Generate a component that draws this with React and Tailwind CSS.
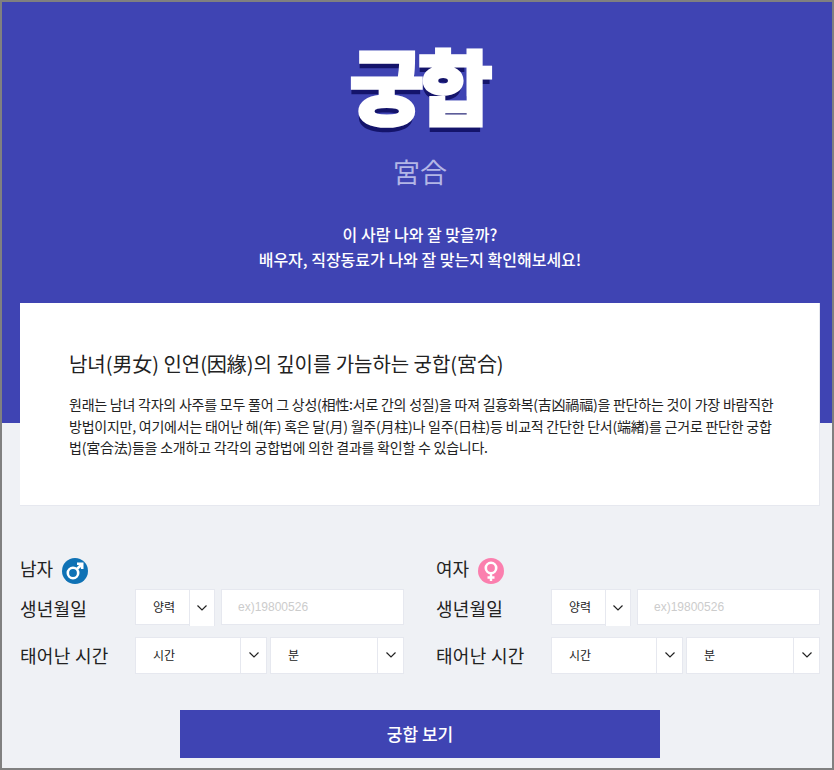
import React from "react";

const font = { fontFamily: '"Noto Sans CJK KR", "Noto Sans", sans-serif' };

function Chevron() {
  return (
    <svg width="12" height="8" viewBox="0 0 12 8" fill="none" stroke="#222" strokeWidth="1.2">
      <path d="M1.5 1.5 L6 6 L10.5 1.5" />
    </svg>
  );
}

function Select({ label, widthClass, labelClass }) {
  return (
    <div className={`flex ${widthClass} h-[37px]`}>
      <div className={`flex-1 bg-white border border-[#e6e8ef] border-r-0 flex items-center text-[12px] text-[#222] ${labelClass}`}>
        {label}
      </div>
      <div className="w-[27px] bg-white border border-[#e6e8ef] flex items-center justify-center shrink-0">
        <Chevron />
      </div>
    </div>
  );
}

function Person({ name, icon }) {
  return (
    <div className="w-[384px]">
      <div className="flex items-center gap-[9px] h-[28px] mt-[3px]">
        <span className="text-[18px] leading-[28px] text-[#222] -mt-[4px]">{name}</span>
        {icon}
      </div>
      <div className="flex items-start mt-[5px] h-[39px]">
        <div className="w-[115px] text-[18px] leading-[38px] text-[#222] tracking-[0.2px]">생년월일</div>
        <div className="flex w-[80px] h-[37px]">
          <div className="w-[54px] h-[36px] bg-white border border-[#e6e8ef] border-r-0 flex items-center text-[12px] text-[#222] pl-[17px]">양력</div>
          <div className="w-[26px] h-[37px] bg-white border-l border-t border-r border-[#e6e8ef] flex items-center justify-center">
            <Chevron />
          </div>
        </div>
        <div className="ml-[6px] w-[183px] h-[36px] bg-white border border-[#e6e8ef] flex items-center pl-[16px] text-[12px] text-[#cccccc]" style={{ fontFamily: '"Liberation Sans", sans-serif' }}>
          ex)19800526
        </div>
      </div>
      <div className="flex items-center mt-[8px] h-[38px]">
        <div className="w-[115px] text-[18px] leading-[38px] text-[#222] tracking-[0.3px]">태어난 시간</div>
        <div className="flex gap-[3px]">
          <Select label="시간" widthClass="w-[132px]" labelClass="pl-[17px]" />
          <Select label="분" widthClass="w-[134px]" labelClass="pl-[17px]" />
        </div>
      </div>
    </div>
  );
}

const Male = (
  <svg width="26" height="26" viewBox="0 0 26 26" className="mt-[2px]">
    <circle cx="13" cy="13" r="13" fill="#0f72b5" />
    <circle cx="11" cy="15" r="5.2" fill="none" stroke="#fff" strokeWidth="2.6" />
    <path d="M15 11 L20 6 M15 5.8 H20.2 V11" fill="none" stroke="#fff" strokeWidth="2.6" />
  </svg>
);

const Female = (
  <svg width="26" height="26" viewBox="0 0 26 26" className="mt-[2px]">
    <circle cx="13" cy="13" r="13" fill="#fb7fae" />
    <circle cx="13" cy="10" r="5.2" fill="none" stroke="#fff" strokeWidth="2.6" />
    <path d="M13 15 V23 M9.5 19.5 H16.5" fill="none" stroke="#fff" strokeWidth="2.4" />
  </svg>
);

export default function App() {
  return (
    <div className="w-[834px] h-[770px] border-2 border-[#808080] bg-[#eff1f5] overflow-hidden" style={font}>
      <div className="h-[421px] bg-[#3f44b3] pl-[18px] pr-[12px]">
        <div className="flex flex-col items-center">
          <div
            className="mt-[26px] text-[81px] leading-[110px] font-black text-white tracking-[-6px] -ml-[4px]"
            style={{ textShadow: "-1px 6px 0 #14146b", WebkitTextStroke: "3px #fff" }}
          >
            궁합
          </div>
          <div className="mt-[14px] text-[27px] leading-[40px] text-[#b3b6e6]">宮合</div>
          <div className="mt-[30px] text-[16px] leading-[25px] font-medium text-white text-center">
            <p>이 사람 나와 잘 맞을까?</p>
            <p>배우자, 직장동료가 나와 잘 맞는지 확인해보세요!</p>
          </div>
        </div>
      </div>
      <div className="pl-[18px] pr-[12px]">
        <div className="relative -mt-[120px] h-[203px] bg-white border-b border-r border-[#e6e8ef] pl-[49px] pt-[44px]">
          <h1 className="text-[20px] leading-[34px] font-normal text-[#222] tracking-[-0.05px]">남녀(男女) 인연(因緣)의 깊이를 가늠하는 궁합(宮合)</h1>
          <p className="mt-[13px] w-[712px] text-[14px] leading-[21.7px] text-[#222] tracking-[-0.23px]">
            원래는 남녀 각자의 사주를 모두 풀어 그 상성(相性:서로 간의 성질)을 따져 길흉화복(吉凶禍福)을 판단하는 것이 가장 바람직한 방법이지만, 여기에서는 태어난 해(年) 혹은 달(月) 월주(月柱)나 일주(日柱)등 비교적 간단한 단서(端緖)를 근거로 판단한 궁합법(宮合法)들을 소개하고 각각의 궁합법에 의한 결과를 확인할 수 있습니다.
          </p>
        </div>
        <div className="flex justify-between mt-[47px]">
          <Person name="남자" icon={Male} />
          <Person name="여자" icon={Female} />
        </div>
        <div className="flex justify-center mt-[36px]">
          <div className="w-[480px] h-[48px] bg-[#3f44b3] text-white text-[17px] font-medium flex items-center justify-center">궁합 보기</div>
        </div>
      </div>
    </div>
  );
}
